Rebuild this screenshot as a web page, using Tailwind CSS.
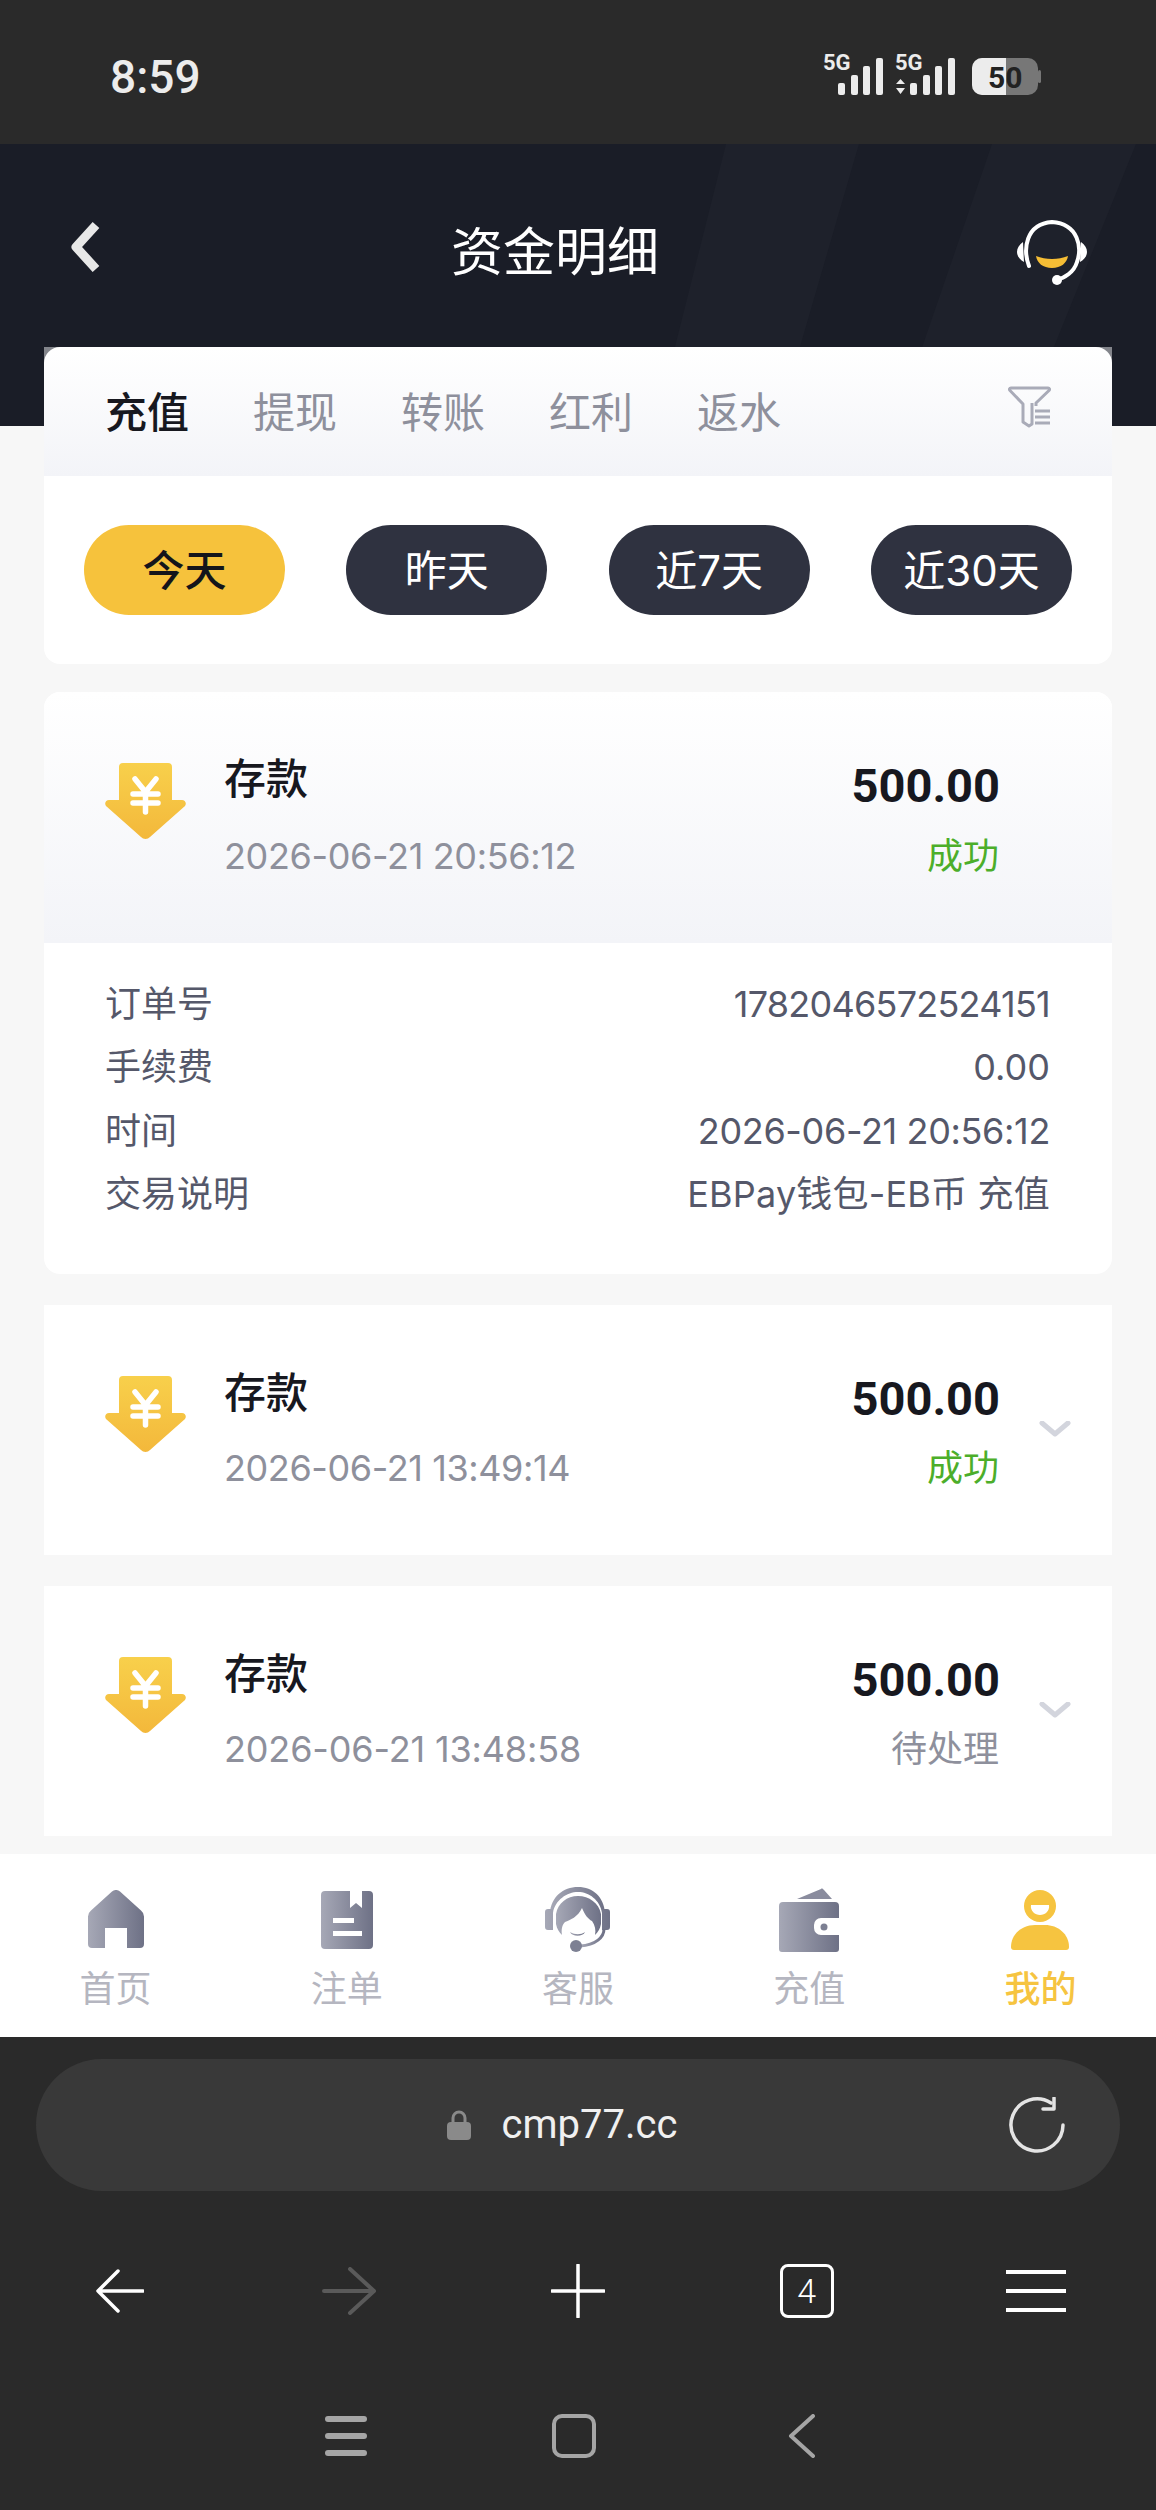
<!DOCTYPE html>
<html lang="en">
<head>
    <meta charset="UTF-8">
    <meta name="viewport" content="width=device-width, initial-scale=1.0">
    <title>资金明细</title>
    <script src="https://cdn.jsdelivr.net/npm/@tailwindcss/browser@4"></script>
</head>
<body class="bg-[#f7f7f7] font-['Inter','Noto_Sans_CJK_SC',sans-serif]">
<div class="w-[1156px] h-[2510px] flex flex-col overflow-hidden">
    <!-- shared gradients -->
    <svg class="absolute w-0 h-0">
        <defs>
            <linearGradient id="navGrad" x1="0" y1="0" x2="1" y2="0"><stop offset="0" stop-color="#a6a8b6"/><stop offset="1" stop-color="#6e7186"/></linearGradient>
            <linearGradient id="yenGrad" x1="0" y1="0" x2="0" y2="1"><stop offset="0" stop-color="#f8d04b"/><stop offset="1" stop-color="#f3b83b"/></linearGradient>
            <symbol id="yenArrow" viewBox="0 0 81 77">
                <path d="M14 4a4 4 0 0 1 4-4h45a4 4 0 0 1 4 4v33h10c3 0 5 3 3 6L45 74a6 6 0 0 1-9 0L1 43c-2-3 0-6 3-6h10z" fill="url(#yenGrad)"/>
                <path d="M30 16l10.500 13L51 16M28 31h25M28 40h25M40.500 29v20" fill="none" stroke="#fff" stroke-width="5.500" stroke-linecap="round" stroke-linejoin="round"/>
            </symbol>
            <symbol id="chevDown" viewBox="0 0 32 16">
                <path d="M3 2l13 11L29 2" fill="none" stroke="#d3d5dd" stroke-width="5" stroke-linecap="round" stroke-linejoin="round"/>
            </symbol>
        </defs>
    </svg>

    <!-- Status bar -->
    <div class="h-[144px] shrink-0 bg-[#2a2a2a] flex items-center justify-between pl-[110px] pr-[115px]">
        <span class="text-[46px] font-medium text-[#ececec] font-['Roboto'] mt-[10px]">8:59</span>
        <svg class="w-[218px] h-[46px] mt-[4px]" viewBox="0 -4 218 46">
            <g fill="#ececec">
                <text x="0" y="15" font-family="Roboto" font-weight="700" font-size="22">5G</text>
                <rect x="15" y="28" width="7" height="12" rx="2"/><rect x="28" y="20" width="7" height="20" rx="2"/><rect x="40" y="11" width="7" height="29" rx="2"/><rect x="53" y="3" width="7" height="37" rx="2"/>
                <text x="72" y="15" font-family="Roboto" font-weight="700" font-size="22">5G</text>
                <path d="M73 29l4.500-5 4.500 5zM73 33l4.500 6 4.500-6z"/>
                <rect x="87" y="28" width="7" height="12" rx="2"/><rect x="100" y="20" width="7" height="20" rx="2"/><rect x="112" y="11" width="7" height="29" rx="2"/><rect x="125" y="3" width="7" height="37" rx="2"/>
            </g>
            <rect x="149" y="3" width="66" height="37" rx="10" fill="#777"/>
            <path d="M159 3h24v37h-24a10 10 0 0 1-10-10V13a10 10 0 0 1 10-10z" fill="#ececec"/>
            <rect x="215" y="15" width="3" height="13" rx="1.500" fill="#777"/>
            <text x="165" y="33" font-family="Roboto" font-weight="700" font-size="30" fill="#222">50</text>
        </svg>
    </div>

    <!-- Header -->
    <div class="relative h-[282px] shrink-0 bg-[#1a1d27] overflow-hidden">
        <svg class="absolute inset-0 w-full h-full" viewBox="0 0 1156 282">
            <path d="M726 0H859L777 282H655zM992 0H1136L1022 282H895z" fill="#1e212b"/>
        </svg>
        <div class="relative flex items-center justify-between pl-[70px] pr-[68px] h-[203px] pt-[15px]">
            <svg class="w-[30px] h-[52px] mb-[12px]" viewBox="0 0 30 52"><path d="M26 4L6 26l20 22" fill="none" stroke="#e8e8e8" stroke-width="9" stroke-linejoin="round"/></svg>
            <h1 class="text-[52px] text-white font-normal leading-none mr-[6px]">资金明细</h1>
            <svg class="w-[72px] h-[66px]" viewBox="0 0 72 66">
                <path d="M13 46C7 30 9 4 36 2c27 2 30 26 25 40-3 10-12 16-21 18" fill="none" stroke="#fff" stroke-width="4" stroke-linecap="round"/>
                <path d="M7 22c-4 3-6 6-6 10 0 4 3 8 7 10zM65 22c4 3 6 6 6 10 0 4-3 8-7 10z" fill="#fff"/>
                <circle cx="41" cy="60" r="5" fill="#fff"/>
                <path d="M20 36c10 4 22 4 32 0-1 7-7 12-16 12s-15-5-16-12z" fill="#f5bd35"/>
            </svg>
        </div>
    </div>

    <!-- Content -->
    <main class="flex-1 min-h-0 px-[44px] mt-[-79px] relative flex flex-col">
        <section class="bg-white rounded-b-[16px]">
            <div class="bg-[#83858b]">
                <div class="h-[129px] rounded-t-[16px] bg-linear-to-b from-white to-[#f3f4f8] flex items-start justify-between pl-[61px] pr-[61px] pt-[38px]">
                    <div class="flex gap-[64px] text-[42px] leading-[56px] text-[#8e909c]">
                        <span class="text-[#17181f] font-medium">充值</span>
                        <span>提现</span>
                        <span>转账</span>
                        <span>红利</span>
                        <span>返水</span>
                    </div>
                    <svg class="w-[43px] h-[42px] mt-[1px]" viewBox="0 0 43 42">
                        <path d="M3 2h37c1.500 0 2 1.500 1 2.500L28 17v3M3 2C1.500 2 1 3.500 2 4.500L15 18v18l6 4 3-2V17M27 25h15M27 31h15M27 37h15" fill="none" stroke="#a9abb8" stroke-width="3" stroke-linejoin="round"/>
                    </svg>
                </div>
            </div>
            <div class="flex justify-between px-[40px] py-[49px] text-[42px]">
                <button class="w-[201px] h-[90px] rounded-full bg-[#f6c23c] text-[#14151b] font-medium">今天</button>
                <button class="w-[201px] h-[90px] rounded-full bg-[#2f3240] text-white">昨天</button>
                <button class="w-[201px] h-[90px] rounded-full bg-[#2f3240] text-white">近7天</button>
                <button class="w-[201px] h-[90px] rounded-full bg-[#2f3240] text-white">近30天</button>
            </div>
        </section>

        <!-- Open record -->
        <section class="mt-[28px] bg-white rounded-[16px] overflow-hidden">
            <div class="h-[251px] bg-linear-to-b from-white to-[#f3f4f8] flex pl-[61px] pr-[112px] pt-[71px]">
                <svg class="w-[81px] h-[77px] shrink-0"><use href="#yenArrow"/></svg>
                <div class="ml-[38px] flex-1 mt-[-12px]">
                    <div class="text-[42px] leading-[56px] font-medium text-[#17181f]">存款</div>
                    <div class="text-[36px] leading-[44px] mt-[27px] tracking-[-0.35px] text-[#8e909c]">2026-06-21 20:56:12</div>
                </div>
                <div class="text-right mt-[-7px]">
                    <div class="text-[47px] leading-[60px] font-bold font-['Roboto'] text-[#17181f]">500.00</div>
                    <div class="text-[36px] leading-[48px] mt-[16px] mr-[1px] text-[#4cae2a]">成功</div>
                </div>
            </div>
            <dl class="pl-[61px] pr-[62px] pt-[30px] pb-[47px] text-[36px] leading-[63.400px] text-[#55586a]">
                <div class="flex justify-between"><dt>订单号</dt><dd class="tracking-[-0.75px]">1782046572524151</dd></div>
                <div class="flex justify-between"><dt>手续费</dt><dd>0.00</dd></div>
                <div class="flex justify-between"><dt>时间</dt><dd class="tracking-[-0.35px]">2026-06-21 20:56:12</dd></div>
                <div class="flex justify-between"><dt>交易说明</dt><dd class="tracking-[0.2px]">EBPay钱包-EB币 充值</dd></div>
            </dl>
        </section>

        <!-- Closed records -->
        <section class="mt-[31px] h-[250px] bg-white flex items-start pl-[61px] pr-[41px] pt-[71px]">
            <svg class="w-[81px] h-[77px] shrink-0"><use href="#yenArrow"/></svg>
            <div class="ml-[38px] flex-1 mt-[-11px]">
                <div class="text-[42px] leading-[56px] font-medium text-[#17181f]">存款</div>
                <div class="text-[36px] leading-[44px] mt-[25px] tracking-[-0.4px] text-[#8e909c]">2026-06-21 13:49:14</div>
            </div>
            <div class="text-right mt-[-7px]">
                <div class="text-[47px] leading-[60px] font-bold font-['Roboto'] text-[#17181f]">500.00</div>
                <div class="text-[36px] leading-[48px] mt-[15px] mr-[1px] text-[#4cae2a]">成功</div>
            </div>
            <svg class="w-[32px] h-[16px] ml-[39px] mt-[45px]"><use href="#chevDown"/></svg>
        </section>
        <section class="mt-[31px] h-[250px] bg-white flex items-start pl-[61px] pr-[41px] pt-[71px]">
            <svg class="w-[81px] h-[77px] shrink-0"><use href="#yenArrow"/></svg>
            <div class="ml-[38px] flex-1 mt-[-11px]">
                <div class="text-[42px] leading-[56px] font-medium text-[#17181f]">存款</div>
                <div class="text-[36px] leading-[44px] mt-[25px] tracking-[-0.15px] text-[#8e909c]">2026-06-21 13:48:58</div>
            </div>
            <div class="text-right mt-[-7px]">
                <div class="text-[47px] leading-[60px] font-bold font-['Roboto'] text-[#17181f]">500.00</div>
                <div class="text-[36px] leading-[48px] mt-[15px] mr-[1px] text-[#8e909c]">待处理</div>
            </div>
            <svg class="w-[32px] h-[16px] ml-[39px] mt-[45px]"><use href="#chevDown"/></svg>
        </section>
    </main>

    <!-- Bottom nav -->
    <nav class="h-[183px] shrink-0 bg-white grid grid-cols-5 text-[36px] leading-[48px] text-[#b5b6c0] relative">
        <a class="flex flex-col items-center">
            <span class="h-[111px] flex items-end pb-[17px]">
                <svg class="w-[56px] h-[58px]" viewBox="0 0 56 58"><path d="M24 1.500a6 6 0 0 1 8 0l21 19a8 8 0 0 1 3 6V54a4 4 0 0 1-4 4H39V38H17v20H4a4 4 0 0 1-4-4V26.500a8 8 0 0 1 3-6z" fill="url(#navGrad)"/></svg>
            </span>
            <span>首页</span>
        </a>
        <a class="flex flex-col items-center">
            <span class="h-[111px] flex items-end pb-[16px]">
                <svg class="w-[52px] h-[58px]" viewBox="0 0 52 58"><path d="M4 0h25v17l6-5 6 5V0h7a4 4 0 0 1 4 4v50a4 4 0 0 1-4 4H4a4 4 0 0 1-4-4V4a4 4 0 0 1 4-4z" fill="url(#navGrad)"/><rect x="12" y="27" width="21" height="5" fill="#fff"/><rect x="12" y="40" width="29" height="5" fill="#fff"/></svg>
            </span>
            <span>注单</span>
        </a>
        <a class="flex flex-col items-center">
            <span class="h-[111px] flex items-end pb-[13px]">
                <svg class="w-[65px] h-[65px]" viewBox="0 0 65 65">
                    <path d="M5 26C6 10 18 0 33 0s26 10 27 26h-3C55 13 44 5 33 5S10 13 8 26z" fill="url(#navGrad)"/>
                    <path d="M33 8c-11 0-20 7-22 18v10c1 5 3 8 6 11-1-5 0-10 3-13 5-2 13-5 17-14 3 7 6 11 10 13 3 4 4 9 3 14 3-3 5-6 6-11V26C54 15 44 8 33 8z" fill="url(#navGrad)" transform="translate(0 1)"/>
                    <path d="M8 22H3c-2 0-3 1-3 3v15c0 2 1 3 3 3h5zM57 22h5c2 0 3 1 3 3v15c0 2-1 3-3 3h-5z" fill="url(#navGrad)"/>
                    <path d="M25 45c5 3 11 3 15 0-2 5-13 5-15 0z" fill="url(#navGrad)"/>
                    <path d="M59 42c0 8-8 16-24 17" fill="none" stroke="url(#navGrad)" stroke-width="3"/>
                    <circle cx="31" cy="59" r="6" fill="#7d8093"/>
                </svg>
            </span>
            <span>客服</span>
        </a>
        <a class="flex flex-col items-center">
            <span class="h-[111px] flex items-end pb-[13px]">
                <svg class="w-[60px] h-[64px]" viewBox="0 0 60 64"><path d="M18 11L42 1c1-1 2 0 3 1l8 9z" fill="#8a8c9e"/><path d="M4 14h52a4 4 0 0 1 4 4v12H42a7 7 0 0 0-7 7v3a7 7 0 0 0 7 7h18v14a3 3 0 0 1-3 3H3a3 3 0 0 1-3-3V18a4 4 0 0 1 4-4z" fill="url(#navGrad)"/><circle cx="45" cy="39" r="3.500" fill="#7d8093"/></svg>
            </span>
            <span>充值</span>
        </a>
        <a class="flex flex-col items-center text-[#f6c440]">
            <span class="h-[111px] flex items-end pb-[15px]">
                <svg class="w-[58px] h-[60px]" viewBox="0 0 58 60"><circle cx="29" cy="16" r="16" fill="#f6c440"/><path d="M20 15h18c1 6-4 10-9 10s-10-4-9-10z" fill="#fff"/><path d="M24 35h10c13 0 24 9 24 22 0 2-1 3-3 3H3c-2 0-3-1-3-3 0-13 11-22 24-22z" fill="#f6c440"/></svg>
            </span>
            <span class="font-medium">我的</span>
        </a>
    </nav>

    <!-- Browser chrome -->
    <div class="h-[473px] shrink-0 bg-[#2a2a2a] flex flex-col">
        <div class="mx-[36px] mt-[22px] h-[132px] rounded-[66px] bg-[#393939] flex items-center relative justify-center pr-[33px]">
            <svg class="w-[26px] h-[30px] mr-[30px]" viewBox="0 0 26 30"><path d="M7 13V8a6 6 0 0 1 12 0v5" fill="none" stroke="#8a8a8a" stroke-width="3"/><rect x="1" y="12" width="24" height="18" rx="4" fill="#8a8a8a"/></svg>
            <span class="text-[40px] text-[#f0f0f0] font-['Roboto'] leading-none">cmp77.cc</span>
            <svg class="absolute right-[55px] top-[38px] w-[56px] h-[56px]" viewBox="0 0 56 56"><path d="M42 6A26 26 0 1 0 54 28" fill="none" stroke="#e4e4e4" stroke-width="3.500" stroke-linecap="round"/><path d="M34 12h11V1" fill="none" stroke="#e4e4e4" stroke-width="3.500" stroke-linecap="round" stroke-linejoin="round"/></svg>
        </div>
        <div class="grid grid-cols-5 mt-[72px] h-[56px] px-[6px] items-center justify-items-center">
            <svg class="w-[48px] h-[44px]" viewBox="0 0 48 44"><path d="M22 2L2 22l20 20M2 22h45" fill="none" stroke="#fff" stroke-width="3.500" stroke-linecap="round" stroke-linejoin="round"/></svg>
            <svg class="w-[54px] h-[48px]" viewBox="0 0 54 48"><path d="M28 2l24 22-24 22M2 24h50" fill="none" stroke="#5a5a5a" stroke-width="4" stroke-linecap="round" stroke-linejoin="round"/></svg>
            <svg class="w-[54px] h-[54px]" viewBox="0 0 54 54"><path d="M27 1v52M1 27h52" fill="none" stroke="#fff" stroke-width="3.500" stroke-linecap="round"/></svg>
            <div class="w-[54px] h-[54px] rounded-[8px] border-[3px] border-white flex items-center justify-center text-[34px] text-white font-['Roboto'] font-light">4</div>
            <div class="w-[60px] flex flex-col gap-[15px]">
                <div class="h-[4px] bg-white"></div>
                <div class="h-[4px] bg-white"></div>
                <div class="h-[4px] bg-white"></div>
            </div>
        </div>
        <div class="flex justify-center items-center mt-[95px] pr-[16px]">
            <div class="w-[42px] mr-[185px] flex flex-col gap-[11px]">
                <div class="h-[6px] rounded-full bg-[#a5a5a5]"></div>
                <div class="h-[6px] rounded-full bg-[#a5a5a5]"></div>
                <div class="h-[6px] rounded-full bg-[#a5a5a5]"></div>
            </div>
            <div class="w-[44px] h-[44px] mr-[192px] rounded-[10px] border-[4px] border-[#a5a5a5]"></div>
            <svg class="w-[27px] h-[44px]" viewBox="0 0 27 44"><path d="M25 2L3 22l22 20" fill="none" stroke="#a5a5a5" stroke-width="4" stroke-linecap="round" stroke-linejoin="round"/></svg>
        </div>
    </div>
</div>
</body>
</html>
